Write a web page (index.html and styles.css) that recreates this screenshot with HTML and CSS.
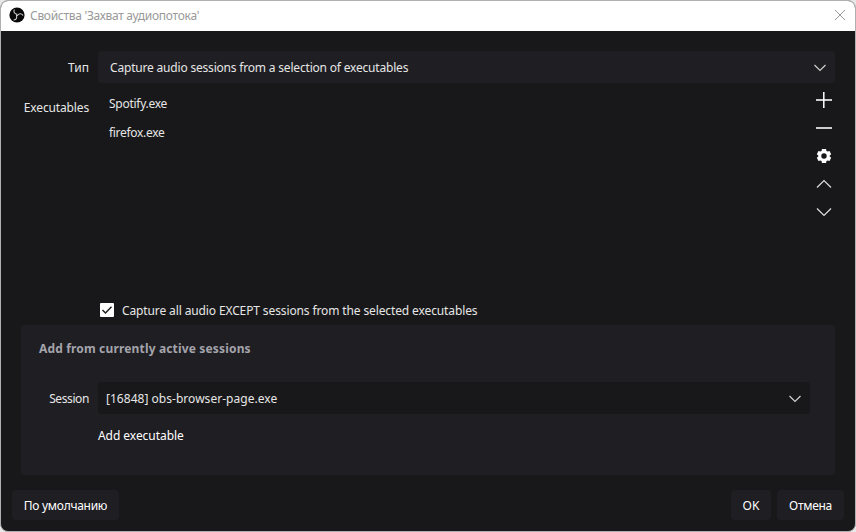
FILE: index.html
```html
<!DOCTYPE html>
<html lang="ru">
<head>
<meta charset="utf-8">
<title>Свойства 'Захват аудиопотока'</title>
<link rel="stylesheet" href="styles.css">
</head>
<body>
<div class="window">
  <header class="titlebar">
    <svg class="logo" viewBox="0 0 16 16"><circle cx="8" cy="8" r="7.6" fill="#080808"/><g fill="none" stroke="#ccc" stroke-width="1.1" stroke-linecap="round"><path d="M8 7.400C5.600 6.800 4.300 5.200 5.200 2.900"/><path d="M8 7.400C5.600 6.800 4.300 5.200 5.200 2.900" transform="rotate(120 8 8)"/><path d="M8 7.400C5.600 6.800 4.300 5.200 5.200 2.900" transform="rotate(240 8 8)"/></g></svg>
    <span class="title">Свойства 'Захват аудиопотока'</span>
    <svg class="close" viewBox="0 0 12 12"><path d="M1 1l10 10M11 1L1 11"/></svg>
  </header>
  <main class="content">
    <div class="row type-row">
      <span class="label t-type">Тип</span>
      <div class="select"><span class="t-mode">Capture audio sessions from a selection of executables</span><svg class="chevron" viewBox="0 0 14 8"><path d="M1.500 1l5.500 5.500L12.500 1"/></svg></div>
    </div>
    <div class="row list-row">
      <span class="label t-execs">Executables</span>
      <ul class="list"><li class="t-spotify">Spotify.exe</li><li class="t-firefox">firefox.exe</li></ul>
      <div class="tools">
        <svg viewBox="0 0 16 16"><path class="bar" d="M0 8h16"/><path class="thin" d="M7.800 0v16"/></svg>
        <svg viewBox="0 0 16 16"><path class="bar" d="M0 8h16"/></svg>
        <svg viewBox="0 0 16 16"><path class="gear" fill-rule="evenodd" d="M6 1h4l.5 2 1 .6 2-.6 1.700 3.200-1.500 1.300v1l1.500 1.300-1.700 3.200-2-.6-1 .6-.5 2H6l-.5-2-1-.6-2 .6L.8 9.800l1.500-1.300v-1L.8 6.200 2.500 3l2 .6 1-.6zM8 5.300a2.700 2.700 0 1 0 0 5.400 2.700 2.700 0 0 0 0-5.400z"/></svg>
        <svg viewBox="0 0 16 16"><path class="line" d="M1 11.500l7-7 7 7"/></svg>
        <svg viewBox="0 0 16 16"><path class="line" d="M1 4.500l7 7 7-7"/></svg>
      </div>
    </div>
    <label class="check-row">
      <svg class="check" viewBox="0 0 14 14"><rect width="14" height="14" rx="1" fill="#fff"/><path d="M2.500 7l3 3 6-6.200" fill="none" stroke="#202020" stroke-width="1.500"/></svg>
      <span class="t-except">Capture all audio EXCEPT sessions from the selected executables</span>
    </label>
    <section class="group">
      <h2 class="t-group">Add from currently active sessions</h2>
      <div class="row">
        <span class="label t-session">Session</span>
        <div class="select dark"><span class="t-process">[16848] obs-browser-page.exe</span><svg class="chevron" viewBox="0 0 14 8"><path d="M1.500 1l5.500 5.500L12.500 1"/></svg></div>
      </div>
      <div class="add"><span class="t-add">Add executable</span></div>
    </section>
  </main>
  <footer class="footer">
    <button class="defaults"><span class="t-defaults">По умолчанию</span></button>
    <button class="ok"><span class="t-ok">OK</span></button>
    <button class="cancel"><span class="t-cancel">Отмена</span></button>
  </footer>
</div>
</body>
</html>
```
FILE: styles.css
```css
* { box-sizing: border-box; }
body { margin: 0; background: #e8e8e8; font: 12px/16px "Noto Sans", sans-serif; color: #e6e6e6; }
svg { display: block; flex: none; }
.window { width: 856px; height: 532px; display: flex; flex-direction: column; border: 1px solid #b0b0b0; border-radius: 8px; overflow: hidden; background: #18181a; white-space: nowrap; }
.titlebar { height: 30px; flex: none; display: flex; align-items: center; padding: 0 9px 2px 8px; background: #fff; color: #999; }
.logo { width: 16px; height: 16px; }
.title { margin: 2px auto 0 5px; letter-spacing: -0.29px; }
.close { width: 12px; height: 12px; fill: none; stroke: #999; stroke-width: 1; }
.content { padding: 20px 20px 0; }
.row { display: flex; }
.label { width: 68px; margin-right: 9px; text-align: right; }
.select { flex: 1; height: 32px; display: flex; align-items: center; justify-content: space-between; padding: 0 8px 0 12px; border-radius: 4px; background: #1f1e23; }
.select span, .type-row .label, .group .label { padding-top: 2px; }
.type-row { align-items: center; }
.chevron { width: 14px; height: 8px; margin-top: 1px; fill: none; stroke: #d0d0d0; stroke-width: 1.200; }
.list-row { height: 218px; padding-top: 9px; }
.list-row .label { padding-top: 8px; }
.list { flex: 1; margin: 0; padding: 4px 0 0 11px; list-style: none; }
.list li { height: 29px; }
.tools { display: flex; flex-direction: column; gap: 12px; margin-right: 3px; }
.tools svg { width: 16px; height: 16px; fill: none; stroke: #fff; }
.thin { stroke-width: 1.500; }
.bar { stroke: #ccc; stroke-width: 2; }
.line { stroke: #dedede; stroke-width: 1.200; }
.gear { fill: #fff; stroke: none; }
.check-row { display: flex; align-items: center; gap: 8px; height: 18px; padding-left: 79px; }
.check-row span { padding-top: 2px; }
.check { width: 14px; height: 14px; }
.group { height: 150px; margin-top: 6px; padding: 16px 25px 0 18px; border-radius: 4px; background: #1f1e23; }
.group h2 { margin: 0 0 25px; font: bold 12px/16px "Noto Sans", sans-serif; color: #a4a4ab; letter-spacing: 0.16px; }
.group .row { align-items: center; }
.group .label { width: 50px; }
.select.dark { background: #18181a; padding-left: 8px; }
.add { padding: 14px 0 0 59px; color: #fff; }
.footer { display: flex; gap: 6px; margin-top: 15px; padding: 0 11px; }
button { height: 30px; padding: 2px 0 0; border: 0; border-radius: 4px; background: #1f1e23; color: #fff; font: inherit; }
.defaults { width: 107px; margin-right: auto; }
.ok { width: 40px; }
.cancel { width: 67px; }
.t-mode { letter-spacing: -0.19px; }
.t-execs { letter-spacing: -0.14px; }
.t-spotify { letter-spacing: -0.27px; }
.t-firefox { letter-spacing: -0.3px; }
.t-except { letter-spacing: -0.12px; }
.t-session { letter-spacing: -0.4px; }
.t-process { letter-spacing: 0.03px; }
.t-add { letter-spacing: -0.05px; }
.t-defaults, .t-cancel { letter-spacing: -0.28px; }
```
